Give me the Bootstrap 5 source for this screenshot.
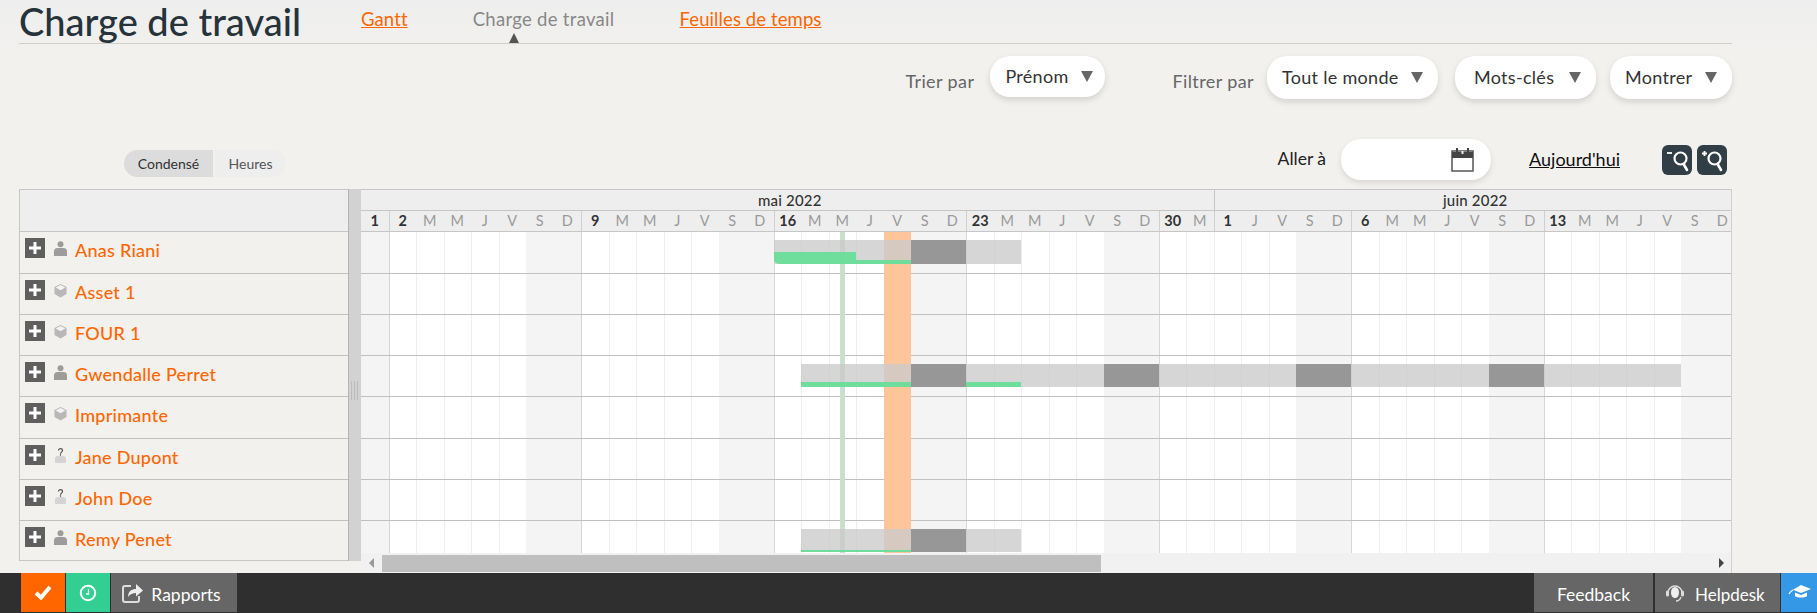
<!DOCTYPE html>
<html lang="fr">
<head>
    <meta charset="UTF-8">
    <title>Charge de travail</title>
    <link href="https://cdn.jsdelivr.net/npm/bootstrap@5.3.0/dist/css/bootstrap.min.css" rel="stylesheet">
    <style>
        html, body { height: 100%; overflow: hidden; }
        body {
            background: linear-gradient(180deg, #eeeeee 0, #f2f1ee 60px);
            font-family: "Lato", "Open Sans", sans-serif;
            color: #333;
        }
        .page-wrap { width: 1732px; padding-left: 19px; flex: 1 1 auto; min-height: 0; }
        .top-head { height: 44px; border-bottom: 1px solid #cfcfcc; }
        .top-title { font-size: 38px; line-height: 44px; font-weight: 500; color: #26333b; width: 342px; margin: -1px 0 0; white-space: nowrap; }
        .top-link { font-size: 18.5px; letter-spacing: .1px; line-height: 24px; color: #ff6600; margin-top: 7px; margin-right: 65px; white-space: nowrap; position: relative; }
        .top-link.current { color: #888; letter-spacing: .3px; text-decoration: none; }
        .top-link.current::after {
            content: ""; position: absolute; left: 36px; top: 26px;
            border: 5px solid transparent; border-top: 0; border-bottom: 10px solid #555;
        }
        .filter-row { margin-top: 12px; height: 43px; }
        .filter-label { font-size: 18px; letter-spacing: .4px; color: #666; margin-top: 12px; white-space: nowrap; }
        .pill-btn {
            background: #fff; border-radius: 20px; box-shadow: 0 3px 6px rgba(0,0,0,.13);
            font-size: 18px; letter-spacing: .3px; height: 43px; padding: 0 15px; color: #333; white-space: nowrap;
        }
        .pill-caret { width: 0; height: 0; border: 6px solid transparent; border-top: 11px solid #666; border-bottom: 0; }
        .btn-sort { width: 115px; height: 41px; padding-right: 12px; }
        .btn-who { width: 171px; }
        .btn-tags { width: 141px; margin-left: 17px; padding-left: 19px; }
        .btn-show { width: 122px; margin-left: 14px; }
        .tool-row { margin-top: 40px; height: 41px; }
        .view-toggle { font-size: 14px; margin: 8px 0 0 105px; height: 27px; }
        .view-toggle span { display: flex; align-items: center; justify-content: center; height: 27px; }
        .view-on { width: 89px; background: #dcdcdc; border-radius: 14px 0 0 14px; color: #333; }
        .view-off { width: 71px; margin-left: 2px; background: #eeeeee; border-radius: 0 14px 14px 0; color: #555; }
        .tool-right { padding-right: 5px; }
        .goto-label { font-size: 17.5px; color: #222; margin-right: 15px; }
        .goto-input {
            width: 150px; height: 41px; background: #fff; border-radius: 20px;
            box-shadow: 0 3px 6px rgba(0,0,0,.1); padding-right: 17px;
        }
        .today-link { font-size: 18px; color: #111; margin: 0 37px 0 38px; }
        .zoom-btn { width: 30px; height: 30px; background: #323e46; border-radius: 6px; margin-left: 5px; }
        .plan-wrap { margin-top: 9px; }
        .res-panel { width: 329px; height: 372px; border: 1px solid #c6c6c6; border-right: 0; }
        .res-head { height: 42px; background: #eeeeee; border-bottom: 1px solid #c6c6c6; }
        .res-row { border-bottom: 1px solid #c0c0c0; padding: 6px 0 0 5px; }
        .res-row:last-child { border-bottom: 0; }
        .plus-box { width: 20px; height: 20px; background: #5f5f5f; }
        .res-icon { width: 13px; height: 15px; margin: 3px 0 0 9px; }
        .res-name { color: #ff6600; font-size: 18px; letter-spacing: .25px; font-weight: 500; line-height: 24px; margin: 0 0 0 8px; white-space: nowrap; }
        .split-bar { width: 13px; height: 372px; background: #d2d2d2; border-left: 1px solid #b4b4b4; padding-top: 192px; }
        .split-grip { width: 7px; height: 19px; margin-left: 2px; border: 1px solid #bdbdbd; border-width: 0 1px; background: linear-gradient(90deg, #d2d2d2 45%, #bdbdbd 45%, #bdbdbd 55%, #d2d2d2 55%); }
        .plan-pane { width: 1371px; height: 384px; overflow: hidden; border-right: 1px solid #d0d0d0; }
        .plan-inner { width: 1375px; }
        .month-row, .day-row, .cell-row { display: grid; grid-template-columns: repeat(50, 27.5px); }
        .month-row { height: 22px; background: #eeeeee; border-top: 1px solid #c6c6c6; border-bottom: 1px solid #c6c6c6; }
        .month-cell { font-size: 15px; letter-spacing: .2px; font-weight: 500; line-height: 21px; text-align: center; color: #333; }
        .month-cell:first-child { padding-left: 5px; }
        .month-cell + .month-cell { border-left: 1px solid #c6c6c6; }
        .day-row { height: 21px; background: #eeeeee; border-bottom: 1px solid #c6c6c6; }
        .day-cell { font-size: 14.5px; line-height: 20px; text-align: center; color: #9a9a9a; }
        .day-cell.week-start { color: #333; font-weight: 700; border-left: 1px solid #cfcfcf; }
        .day-cell.first-day { color: #333; font-weight: 700; }
        .plan-body { height: 321px; overflow: hidden; }
        .cell-row { border-bottom: 1px solid #c0c0c0; background: #fff; }
        .grid-cell { border-left: 1px solid #eeeeee; }
        .grid-cell.weekend { background: #f4f4f4; border-left-color: transparent; }
        .grid-cell.week-start { border-left-color: #d6d6d6; }
        .grid-cell:first-child { border-left-color: transparent; }
        .day-mark { top: 0; bottom: 0; z-index: 1; }
        .mark-now { background: #fec59b; }
        .mark-today { background: #c9dfd0; width: 5px; }
        .load-bar { z-index: 2; background: rgba(203,203,203,.78); }
        .load-bar.full { background: #979797; }
        .load-bar.done { background: rgba(100,222,150,.9); }
        .load-bar.round-start { border-bottom-left-radius: 5px; }
        .fake-scroll { height: 20px; background: #f1f1f1; }
        .scroll-thumb { width: 719px; height: 17px; margin: 2px 0 0 0; background: #bfbfbf; }
        .scroll-left { width: 21px; }
        .scroll-left::before { content: ""; display: block; margin: 5px 0 0 8px; border: 5px solid transparent; border-left: 0; border-right: 5px solid #999; width: 0; }
        .scroll-right { margin: 5px 7px 0 auto; border: 5px solid transparent; border-right: 0; border-left: 5px solid #444; width: 0; height: 0; }
        .foot-bar { height: 40px; background: #2f2f2f; padding: 0 0 1px 21px; color: #fff; flex: none; }
        .foot-btn { height: 39px; display: flex; align-items: center; justify-content: center; font-size: 17.5px; white-space: nowrap; }
        .foot-label { padding-top: 5px; }
        .foot-check { width: 44px; background: #ff6600; }
        .foot-clock { width: 44px; margin-left: 1px; background: #33ce92; }
        .foot-report { width: 126px; margin-left: 1px; background: #666; padding-right: 6px; }
        .foot-feedback { width: 119px; margin-left: auto; background: #666; }
        .foot-help { width: 125px; margin-left: 2px; background: #666; font-size: 17px; justify-content: flex-start; padding-left: 10px; }
        .foot-help svg { margin-right: 10px; }
        .foot-learn { width: 36px; margin-left: 1px; background: #3498e6; }
    </style>
</head>
<body class="d-flex flex-column">
<div class="page-wrap">
    <div class="top-head d-flex">
        <h1 class="top-title">Charge de travail</h1>
        <a class="top-link" href="#">Gantt</a>
        <a class="top-link current" href="#">Charge de travail</a>
        <a class="top-link" href="#">Feuilles de temps</a>
    </div>

    <div class="filter-row d-flex justify-content-end">
        <span class="filter-label me-3">Trier par</span>
        <div class="pill-btn btn-sort d-flex align-items-center justify-content-between">Prénom<span class="pill-caret"></span></div>
        <span class="filter-label" style="margin-left:67px;margin-right:13px">Filtrer par</span>
        <div class="pill-btn btn-who d-flex align-items-center justify-content-between">Tout le monde<span class="pill-caret"></span></div>
        <div class="pill-btn btn-tags d-flex align-items-center justify-content-between">Mots-clés<span class="pill-caret"></span></div>
        <div class="pill-btn btn-show d-flex align-items-center justify-content-between">Montrer<span class="pill-caret"></span></div>
    </div>

    <div class="tool-row d-flex align-items-center">
        <div class="view-toggle d-flex"><span class="view-on">Condensé</span><span class="view-off">Heures</span></div>
        <div class="tool-right ms-auto d-flex align-items-center">
            <span class="goto-label">Aller à</span>
            <div class="goto-input d-flex align-items-center justify-content-end">
                <svg width="23" height="24" viewBox="0 0 23 24"><rect x="1" y="3" width="21" height="20" fill="#fff" stroke="#555" stroke-width="1.5"/><rect x="1" y="4" width="21" height="6" fill="#444"/><path d="M6 0v7M17 0v7" stroke="#444" stroke-width="2"/><path d="M11.500 3v3" stroke="#eee" stroke-width="2"/></svg>
            </div>
            <a class="today-link" href="#">Aujourd'hui</a>
            <div class="zoom-btn">
                <svg class="d-block" width="30" height="30" viewBox="0 0 30 30" fill="none" stroke="#fff" stroke-width="2.2"><circle cx="18.500" cy="13.500" r="6"/><path d="M21.500 19l3.500 6" stroke-width="2.600" stroke-linecap="round"/><path d="M5 8h5" stroke-width="1.800"/></svg>
            </div>
            <div class="zoom-btn">
                <svg class="d-block" width="30" height="30" viewBox="0 0 30 30" fill="none" stroke="#fff" stroke-width="2.2"><circle cx="17.500" cy="13.500" r="6"/><path d="M20.500 19l3.500 6" stroke-width="2.600" stroke-linecap="round"/><path d="M5 8.500h5M7.500 6v5" stroke-width="1.800"/></svg>
            </div>
        </div>
    </div>

    <div class="plan-wrap d-flex">
        <div class="res-panel">
            <div class="res-head"></div>
            <div id="resList"></div>
        </div>
        <div class="split-bar"><div class="split-grip"></div></div>
        <div class="plan-pane">
            <div class="plan-inner">
                <div class="month-row" id="monthRow"></div>
                <div class="day-row" id="dayRow"></div>
                <div class="plan-body position-relative" id="planBody"></div>
            </div>
            <div class="fake-scroll d-flex">
                <div class="scroll-left"></div>
                <div class="scroll-thumb"></div>
                <div class="scroll-right"></div>
            </div>
        </div>
    </div>
</div>

<div class="foot-bar d-flex">
    <div class="foot-btn foot-check">
        <svg width="18" height="15" viewBox="0 0 18 15" fill="none" stroke="#fff" stroke-width="4"><path d="M2 8l5 4.500L16 2"/></svg>
    </div>
    <div class="foot-btn foot-clock">
        <svg width="18" height="18" viewBox="0 0 18 18" fill="none" stroke="#fff"><circle cx="9" cy="9" r="7.200" stroke-width="2"/><path d="M9.500 5v5H7" stroke-width="1.300"/></svg>
    </div>
    <div class="foot-btn foot-report">
        <svg class="me-2" width="22" height="22" viewBox="0 0 22 22" fill="none" stroke="#ddd"><path d="M10 4H4a2 2 0 0 0-2 2v12a2 2 0 0 0 2 2h12a2 2 0 0 0 2-2v-4" stroke-width="2"/><path d="M7 15c0-6 4-8 8-8V2l7 6.500-7 6V11c-3 0-6 1-8 4z" fill="#eee" stroke="none"/></svg>
        <span class="foot-label">Rapports</span>
    </div>
    <div class="foot-btn foot-feedback"><span class="foot-label">Feedback</span></div>
    <div class="foot-btn foot-help">
        <svg width="20" height="20" viewBox="0 0 20 20" fill="none" stroke="#ddd"><path d="M3 10a7 7 0 0 1 14 0" stroke-width="1.500"/><ellipse cx="10" cy="9.500" rx="4" ry="5.500" fill="#eee" stroke="none"/><rect x="1" y="7.500" width="3" height="6" rx="1.500" fill="#ddd" stroke="none"/><rect x="16" y="7.500" width="3" height="6" rx="1.500" fill="#ddd" stroke="none"/><path d="M16 14c-1 3-3 4-5 4" stroke-width="1.300"/></svg>
        <span class="foot-label">Helpdesk</span>
    </div>
    <div class="foot-btn foot-learn">
        <svg width="23" height="17" viewBox="0 0 23 17" fill="#fff"><path d="M13 1l10 4-10 4-8-3.200L13 1z"/><path d="M7 8.500l6 2.500 6-2.500V12c-2 2-10 2-12 0V8.500z"/><path d="M1 10c1-2 2-3 4-4" fill="none" stroke="#fff" stroke-width="1.200"/></svg>
    </div>
</div>

<script>
    const DAY_W = 27.5;
    const letters = ["L", "M", "M", "J", "V", "S", "D"];
    // 1 mai 2022 = dimanche, 50 jours affichés
    const days = [];
    for (let i = 0; i < 50; i++) {
        const num = i < 31 ? i + 1 : i - 30;
        const wd = (i + 6) % 7;
        const first = wd === 0 || i === 0 || i === 31;
        days.push({ text: first ? num : letters[wd], first: first, weekend: wd >= 5, monday: wd === 0 });
    }

    document.getElementById("monthRow").innerHTML =
        '<div class="month-cell" style="grid-column: 1 / span 31">mai 2022</div>' +
        '<div class="month-cell" style="grid-column: 32 / span 19">juin 2022</div>';

    document.getElementById("dayRow").innerHTML = days.map((d, i) =>
        `<div class="day-cell ${i === 0 ? "first-day" : d.first ? "week-start" : ""}">${d.text}</div>`
    ).join("");

    const ICONS = {
        person: '<svg class="res-icon" viewBox="0 0 13 15" fill="#9c9c9c"><circle cx="6.500" cy="3.300" r="3"/><path d="M0 15v-4.500C0 8 1.500 7 3.500 7h6c2 0 3.500 1 3.500 3.500V15z"/></svg>',
        asset: '<svg class="res-icon" viewBox="0 0 13 15"><path d="M6.500 1l6 3v7l-6 3.500-6-3.500V4z" fill="#b8b8b8"/><path d="M6.500 2l4.800 2.500-4.800 2.800-4.800-2.800z" fill="#f4f4f4"/></svg>',
        unknown: '<svg class="res-icon" viewBox="0 0 13 15" fill="#d4d4d4"><path d="M1 15v-4c0-2 1-3 3-3h5c2 0 3 1 3 3v4z"/><path d="M4.500 2.500c0-2.500 4-2.500 4 0 0 1.500-2 1.800-2 3.300M6.500 6.300v1.400" fill="none" stroke="#555" stroke-width="1.200"/></svg>'
    };

    const people = [
        { name: "Anas Riani", icon: "person", h: 42,
          bars: [{ c: "", from: 15, to: 24, y: 8, h: 24 }, { c: "full", from: 20, to: 22, y: 8, h: 24 },
                 { c: "done round-start", from: 15, to: 18, y: 20, h: 12 }, { c: "done", from: 18, to: 20, y: 28, h: 4 }] },
        { name: "Asset 1", icon: "asset", h: 41, bars: [] },
        { name: "FOUR 1", icon: "asset", h: 41, bars: [] },
        { name: "Gwendalle Perret", icon: "person", h: 41,
          bars: [{ c: "", from: 16, to: 48, y: 8, h: 23 }, { c: "full", from: 20, to: 22, y: 8, h: 23 }, { c: "full", from: 27, to: 29, y: 8, h: 23 },
                 { c: "full", from: 34, to: 36, y: 8, h: 23 }, { c: "full", from: 41, to: 43, y: 8, h: 23 },
                 { c: "done", from: 16, to: 20, y: 26, h: 5 }, { c: "done", from: 22, to: 24, y: 26, h: 5 }] },
        { name: "Imprimante", icon: "asset", h: 42, bars: [] },
        { name: "Jane Dupont", icon: "unknown", h: 41, bars: [] },
        { name: "John Doe", icon: "unknown", h: 41, bars: [] },
        { name: "Remy Penet", icon: "person", h: 41,
          bars: [{ c: "", from: 16, to: 24, y: 8, h: 23 }, { c: "full", from: 20, to: 22, y: 8, h: 23 }, { c: "done", from: 16, to: 20, y: 29, h: 2 }] }
    ];

    document.getElementById("resList").innerHTML = people.map(p => `
        <div class="res-row d-flex" style="height:${p.h}px">
            <div class="plus-box d-flex align-items-center justify-content-center">
                <svg width="12" height="12" viewBox="0 0 12 12" fill="#fff"><path d="M4.500 0h3v4.500H12v3H7.500V12h-3V7.500H0v-3h4.500z"/></svg>
            </div>
            ${ICONS[p.icon]}
            <p class="res-name">${p.name}</p>
        </div>`).join("");

    const cells = days.map(d =>
        `<div class="grid-cell ${d.weekend ? "weekend" : ""} ${d.monday ? "week-start" : ""}"></div>`).join("");

    document.getElementById("planBody").innerHTML =
        `<div class="day-mark mark-now position-absolute" style="left:${19 * DAY_W}px;width:${DAY_W}px"></div>` +
        '<div class="day-mark mark-today position-absolute" style="left:479px"></div>' +
        people.map(p => `
            <div class="cell-row position-relative" style="height:${p.h}px">
                ${cells}
                ${p.bars.map(b => `<div class="load-bar position-absolute ${b.c}" style="left:${b.from * DAY_W}px;width:${(b.to - b.from) * DAY_W}px;top:${b.y}px;height:${b.h}px"></div>`).join("")}
            </div>`).join("");
</script>
<script src="https://cdn.jsdelivr.net/npm/bootstrap@5.3.0/dist/js/bootstrap.bundle.min.js"></script>
</body>
</html>
